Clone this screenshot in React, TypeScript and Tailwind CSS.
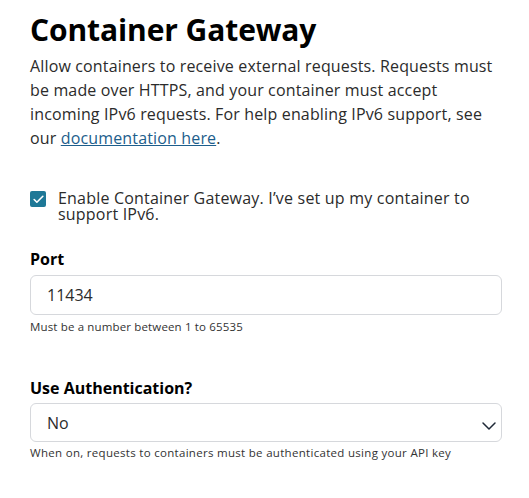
import { ChevronDown, Check } from "lucide-react";

export default function App() {
  return (
    <div className="min-h-[498px] bg-white text-[#1a1a1a]">
      <div className="w-[472px] ml-[30px] pt-[10px] font-['Open_Sans',sans-serif]">
        <h1 className="text-[30px] leading-[40px] font-bold text-black tracking-[-0.1px]">
          Container Gateway
        </h1>
        <p className="mt-[4px] text-[16px] leading-[24px] tracking-[0.15px] text-[#2b2b2b]">
          Allow containers to receive external requests. Requests must be made
          over HTTPS, and your container must accept incoming IPv6 requests.
          For help enabling IPv6 support, see our{" "}
          <a href="#" className="text-[#1d5e8c] underline">
            documentation here
          </a>
          .
        </p>

        <label className="mt-[40px] flex items-start gap-[12px]">
          <span className="mt-[1px] flex h-[16px] w-[16px] shrink-0 items-center justify-center rounded-[2px] bg-[#1e7897]">
            <Check size={13} strokeWidth={3} color="white" />
          </span>
          <span className="text-[16px] leading-[16px] tracking-[0.2px] text-[#2b2b2b]">
            Enable Container Gateway. I’ve set up my container to support IPv6.
          </span>
        </label>

        <div className="mt-[27px]">
          <div className="text-[16px] leading-[20px] font-bold text-black">Port</div>
          <div className="mt-[6px] flex h-[40px] items-center rounded-[6px] border border-[#d6d8dc] px-[16px] text-[16px] text-[#2b2b2b]">
            11434
          </div>
          <div className="mt-[5px] text-[11.5px] leading-[14px] tracking-[0.15px] text-[#333]">
            Must be a number between 1 to 65535
          </div>
        </div>

        <div className="mt-[44px]">
          <div className="text-[16px] leading-[20px] font-bold text-black">
            Use Authentication?
          </div>
          <div className="mt-[5px] flex h-[39px] items-center justify-between rounded-[6px] border border-[#d6d8dc] pl-[16px] pr-0 text-[16px] text-[#2b2b2b]">
            <span>No</span>
            <ChevronDown size={24} strokeWidth={1.5} color="#1f2937" className="mt-[6px]" />
          </div>
          <div className="mt-[4px] text-[11.5px] leading-[14px] tracking-[0.3px] text-[#333]">
            When on, requests to containers must be authenticated using your API key
          </div>
        </div>
      </div>
    </div>
  );
}
